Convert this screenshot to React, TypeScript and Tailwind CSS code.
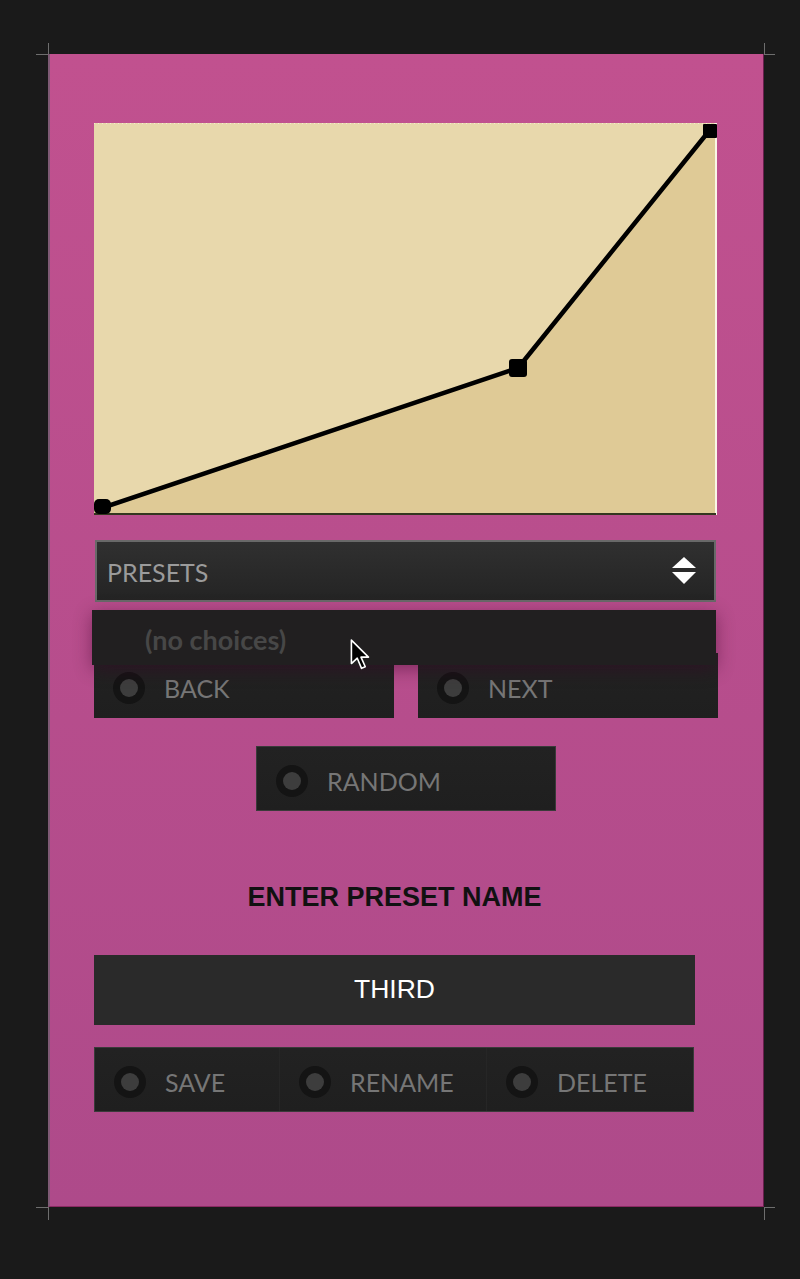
import React from "react";

const lato = { fontFamily: "Lato, 'Open Sans', sans-serif" } as React.CSSProperties;

function Dot() {
  return (
    <div className="w-[32px] h-[32px] rounded-full bg-[#141414] flex items-center justify-center shrink-0">
      <div className="w-[18px] h-[18px] rounded-full bg-[#3d3d3d]" />
    </div>
  );
}

function Btn({ label, className }: { label: string; className: string }) {
  return (
    <div
      className={`flex items-center pl-[19px] pt-[5px] gap-[19px] bg-gradient-to-b from-[#222222] to-[#1f1f1f] ${className}`}
    >
      <Dot />
      <span className="text-[25px] leading-none text-[#767676]" style={lato}>
        {label}
      </span>
    </div>
  );
}

export default function App() {
  return (
    <div className="relative min-h-[1279px] bg-[#1a1a1a] pt-[54px] pl-[48px]">
      {/* crop marks */}
      <div className="absolute left-[36px] top-[54px] w-[12px] h-px bg-[#6e6e6e]" />
      <div className="absolute left-[48px] top-[43px] w-px h-[11px] bg-[#6e6e6e]" />
      <div className="absolute left-[764px] top-[54px] w-[11px] h-px bg-[#6e6e6e]" />
      <div className="absolute left-[764px] top-[43px] w-px h-[11px] bg-[#6e6e6e]" />
      <div className="absolute left-[36px] top-[1207px] w-[12px] h-px bg-[#6e6e6e]" />
      <div className="absolute left-[48px] top-[1207px] w-px h-[13px] bg-[#6e6e6e]" />
      <div className="absolute left-[764px] top-[1207px] w-[11px] h-px bg-[#6e6e6e]" />
      <div className="absolute left-[764px] top-[1207px] w-px h-[13px] bg-[#6e6e6e]" />

      <div className="relative w-[716px] h-[1153px] box-border bg-gradient-to-b from-[#c1518f] to-[#ae4a8a] border-l-2 border-l-[#7e5a74] border-r border-r-[#6a1f4e] border-b border-b-[#8a2a62] pl-[44px] pt-[69px]">
        {/* graph */}
        <div className="w-[623px] h-[392px]">
          <svg width="623" height="392" viewBox="0 0 623 392" className="block">
            <rect x="0" y="0" width="623" height="392" fill="#e8d8ac" />
            <line x1="0" y1="0.5" x2="623" y2="0.5" stroke="#f4ecd0" strokeWidth="1" strokeDasharray="1 3" />
            <polygon points="8,385 424,245 615,8 621,8 621,392 0,392 0,385" fill="#dfca96" />
            <rect x="621" y="0" width="2" height="392" fill="#faf6e6" />
            <rect x="0" y="390" width="622" height="2" fill="#34361f" />
            <polyline
              points="8,385 424,245 615,8"
              fill="none"
              stroke="#000"
              strokeWidth="4.5"
              strokeLinejoin="round"
            />
            <rect x="0" y="376" width="17" height="15" rx="5" fill="#000" />
            <rect x="415" y="236" width="18" height="18" rx="3" fill="#000" />
            <rect x="609" y="1" width="14" height="14" rx="1" fill="#000" />
          </svg>
        </div>

        {/* presets select */}
        <div className="mt-[25px] ml-px w-[621px] h-[62px] box-border border-2 border-[#696969] bg-gradient-to-b from-[#303030] to-[#242424] flex items-center justify-between pl-[10px] pr-[18px]">
          <span className="text-[25px] leading-none text-[#9b9b9b] pt-[2px]" style={lato}>
            PRESETS
          </span>
          <svg width="24" height="28" viewBox="0 0 24 28" className="block">
            <polygon points="12,0 24,11 0,11" fill="#ffffff" />
            <polygon points="0,15 24,15 12,27" fill="#ffffff" />
          </svg>
        </div>

        {/* back / next */}
        <div className="mt-[51px] flex gap-[24px]">
          <Btn label="BACK" className="w-[300px] h-[65px]" />
          <Btn label="NEXT" className="w-[300px] h-[65px]" />
        </div>

        {/* random */}
        <div className="mt-[28px] ml-[162px]">
          <Btn label="RANDOM" className="w-[300px] h-[65px] border border-[#3a3a3a]" />
        </div>

        {/* heading */}
        <div
          className="mt-[70px] w-[601px] text-center text-[27px] leading-[32px] font-bold text-[#111111]"
          style={{ fontFamily: "'Liberation Sans', Arial, sans-serif" }}
        >
          ENTER PRESET NAME
        </div>

        {/* input */}
        <div
          className="mt-[42px] w-[601px] h-[70px] bg-[#2a2a2a] flex items-center justify-center text-[26.5px] text-white"
          style={{ fontFamily: "'Liberation Sans', Arial, sans-serif" }}
        >
          THIRD
        </div>

        {/* save / rename / delete */}
        <div className="mt-[22px] w-[600px] h-[65px] flex bg-[#1f1f1f] border border-[#3a3a3a] box-border">
          <Btn label="SAVE" className="w-[185px] h-full border-r border-[#262626]" />
          <Btn label="RENAME" className="w-[207px] h-full border-r border-[#262626]" />
          <Btn label="DELETE" className="flex-1 h-full" />
        </div>

        {/* dropdown menu overlay */}
        <div className="absolute left-[42px] top-[556px] w-[624px] h-[55px] bg-[#211f20] shadow-[0_4px_18px_rgba(60,0,40,0.45)] flex items-center pl-[53px]">
          <span className="text-[27px] font-bold leading-none text-[#474747] pt-[3px]" style={lato}>
            (no choices)
          </span>
        </div>

        {/* mouse cursor */}
        <svg
          width="22"
          height="32"
          viewBox="0 0 20 30"
          className="absolute left-[300px] top-[585px] block"
        >
          <path
            d="M1 1 L1 23 L6.5 18 L10.5 27.5 L14 26 L10 17 L17 17 Z"
            fill="#000"
            stroke="#fff"
            strokeWidth="1.5"
            strokeLinejoin="round"
          />
        </svg>
      </div>
    </div>
  );
}
